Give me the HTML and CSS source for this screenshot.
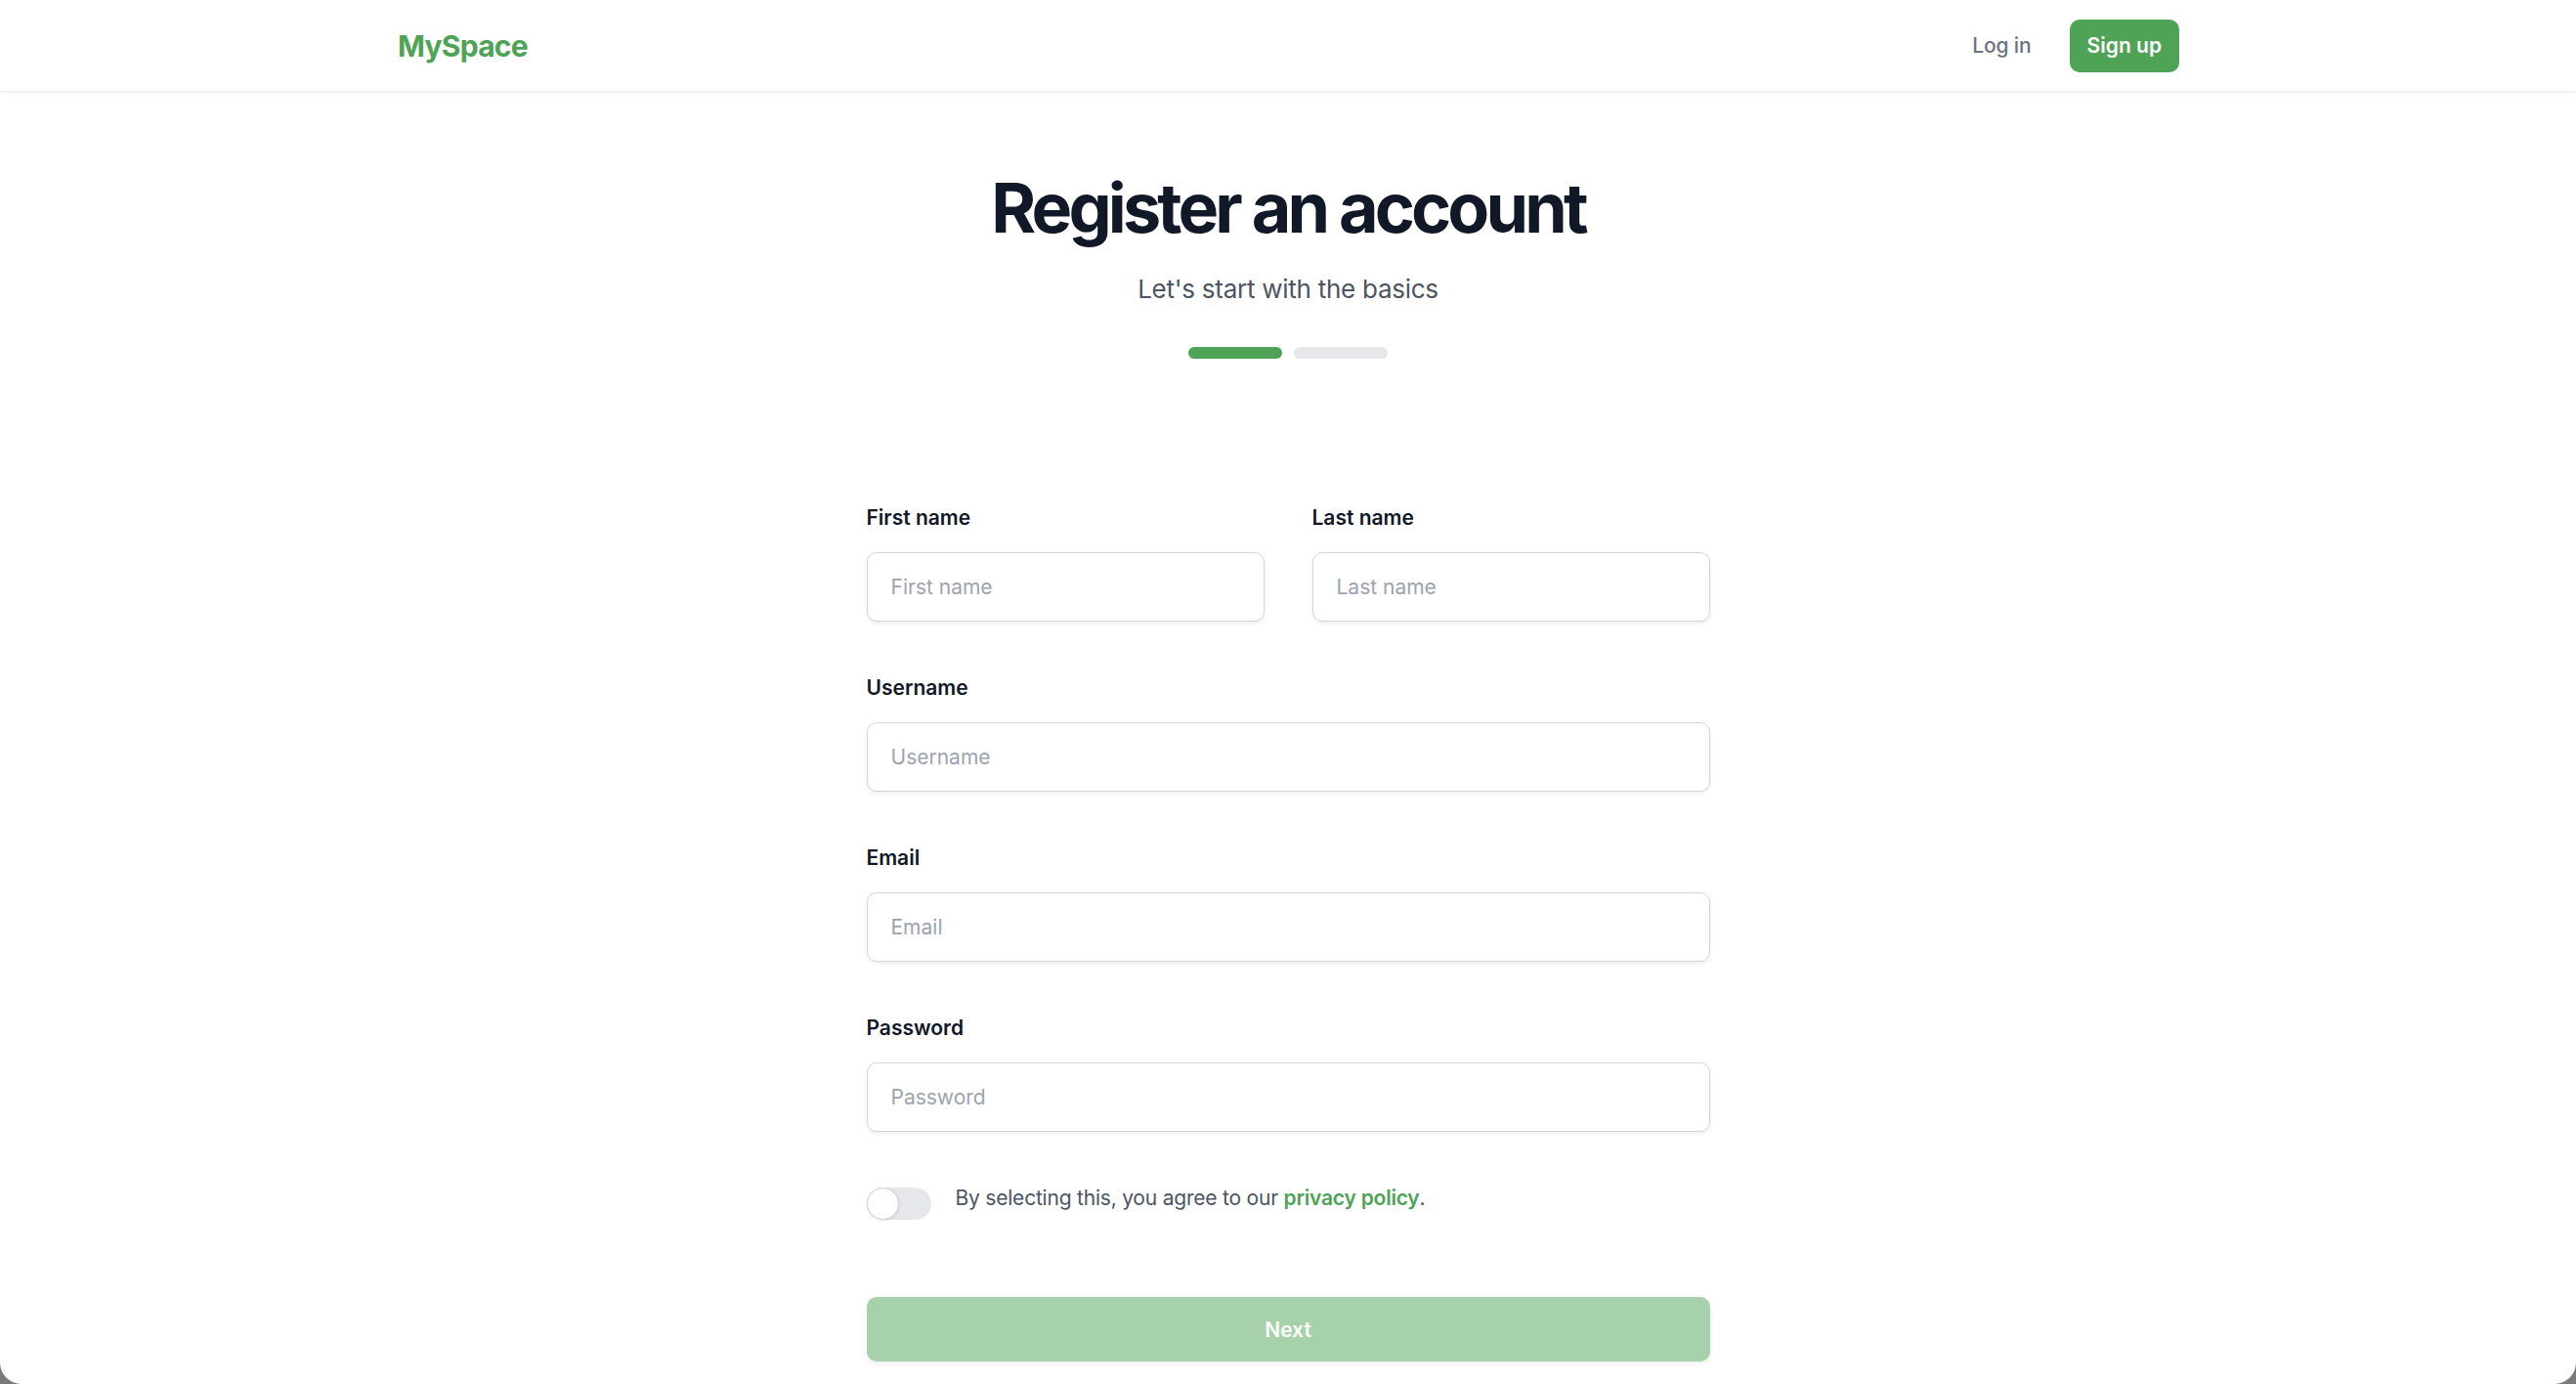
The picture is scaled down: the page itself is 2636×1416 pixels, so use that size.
FILE: index.html
```html
<!DOCTYPE html>
<html lang="en">
<head>
<meta charset="utf-8">
<title>MySpace - Register an account</title>
<link rel="stylesheet" href="styles.css">
</head>
<body>
<div class="page">
  <header class="topbar">
    <div class="topbar-inner">
      <a class="logo" href="#">MySpace</a>
      <nav class="nav">
        <a class="nav-login" href="#">Log in</a>
        <a class="nav-signup" href="#">Sign up</a>
      </nav>
    </div>
  </header>

  <main class="main">
    <h1 class="title">Register an account</h1>
    <p class="subtitle">Let's start with the basics</p>
    <div class="steps">
      <span class="step step-active"></span>
      <span class="step"></span>
    </div>

    <form class="form">
      <div class="row-two">
        <div class="field">
          <label class="label" for="first">First name</label>
          <input class="input" id="first" type="text" placeholder="First name">
        </div>
        <div class="field">
          <label class="label" for="last">Last name</label>
          <input class="input" id="last" type="text" placeholder="Last name">
        </div>
      </div>
      <div class="field">
        <label class="label" for="username">Username</label>
        <input class="input" id="username" type="text" placeholder="Username">
      </div>
      <div class="field">
        <label class="label" for="email">Email</label>
        <input class="input" id="email" type="email" placeholder="Email">
      </div>
      <div class="field">
        <label class="label" for="password">Password</label>
        <input class="input" id="password" type="password" placeholder="Password">
      </div>

      <div class="agree">
        <span class="toggle"><span class="knob"></span></span>
        <p class="agree-text">By selecting this, you agree to our <a class="link" href="#">privacy policy</a>.</p>
      </div>

      <button class="next" type="button">Next</button>
    </form>
  </main>
</div>
</body>
</html>
```

FILE: styles.css
```css
* { box-sizing: border-box; }

html {
  background: #7a7a7a;
}

body {
  margin: 0;
  font-family: "Inter", "Noto Sans", "Liberation Sans", sans-serif;
  color: #111827;
}

.page {
  height: 1416px;
  overflow: hidden;
  background: #ffffff;
  border-radius: 0 0 22px 22px;
}

/* Header */
.topbar {
  height: 94px;
  background: #ffffff;
  border-bottom: 1px solid #f1f1f2;
  box-shadow: 0 1px 4px rgba(0, 0, 0, 0.05);
}

.topbar-inner {
  width: 1824px;
  height: 100%;
  margin: 0 auto;
  display: flex;
  align-items: center;
  justify-content: space-between;
}

.logo {
  font-size: 30px;
  font-weight: 700;
  color: #4ea356;
  text-decoration: none;
  letter-spacing: -0.025em;
  margin-left: 1px;
}

.nav {
  display: flex;
  align-items: center;
  gap: 39px;
}

.nav-login {
  font-size: 21px;
  font-weight: 500;
  color: #6b7280;
  text-decoration: none;
  letter-spacing: -0.005em;
}

.nav-signup {
  display: flex;
  align-items: center;
  height: 54px;
  padding: 0 18px;
  border-radius: 10px;
  background: #4ea356;
  color: #ffffff;
  font-size: 21px;
  font-weight: 600;
  text-decoration: none;
}

/* Main */
.main {
  display: flex;
  flex-direction: column;
  align-items: center;
}

.title {
  margin: 80px 0 0;
  font-size: 70px;
  line-height: 78px;
  font-weight: 700;
  letter-spacing: -0.055em;
  color: #111827;
}

.subtitle {
  margin: 26px 0 0;
  font-size: 26px;
  line-height: 36px;
  letter-spacing: -0.01em;
  color: #4b5563;
}

.steps {
  display: flex;
  gap: 12px;
  margin-top: 41px;
}

.step {
  width: 96px;
  height: 12px;
  border-radius: 6px;
  background: #e5e7eb;
}

.step-active {
  background: #4ea356;
}

/* Form */
.form {
  width: 863px;
  margin-top: 148px;
  display: flex;
  flex-direction: column;
  gap: 53px;
}

.row-two {
  display: grid;
  grid-template-columns: 1fr 1fr;
  gap: 49px;
}

.field {
  display: flex;
  flex-direction: column;
  gap: 20px;
}

.label {
  font-size: 21px;
  line-height: 30px;
  font-weight: 600;
  color: #111827;
}

.input {
  height: 71px;
  width: 100%;
  padding: 0 24px;
  border: 1.5px solid #d4d6dc;
  border-radius: 10px;
  background: #ffffff;
  box-shadow: 0 2px 4px rgba(0, 0, 0, 0.07);
  font-family: inherit;
  font-size: 21px;
  color: #111827;
  outline: none;
}

.input::placeholder {
  color: #9ca3af;
}

.agree {
  display: flex;
  align-items: flex-start;
  gap: 25px;
  margin-top: 0;
}

.toggle {
  position: relative;
  flex: none;
  width: 66px;
  height: 33px;
  margin-top: 4px;
  border-radius: 17px;
  background: #e5e7eb;
}

.knob {
  position: absolute;
  left: 0;
  top: 0;
  width: 33px;
  height: 33px;
  border-radius: 50%;
  background: #ffffff;
  border: 1.5px solid #d1d5db;
  box-shadow: 0 1px 3px rgba(0, 0, 0, 0.1);
}

.agree-text {
  margin: 0;
  font-size: 21px;
  line-height: 30px;
  letter-spacing: -0.01em;
  color: #4b5563;
}

.link {
  color: #4ea356;
  font-weight: 600;
  text-decoration: none;
}

.next {
  height: 66px;
  margin-top: 26px;
  border: none;
  border-radius: 10px;
  background: #a7d1aa;
  color: #ffffff;
  font-family: inherit;
  font-size: 21px;
  font-weight: 600;
  box-shadow: 0 2px 6px rgba(0, 0, 0, 0.08);
}
```
